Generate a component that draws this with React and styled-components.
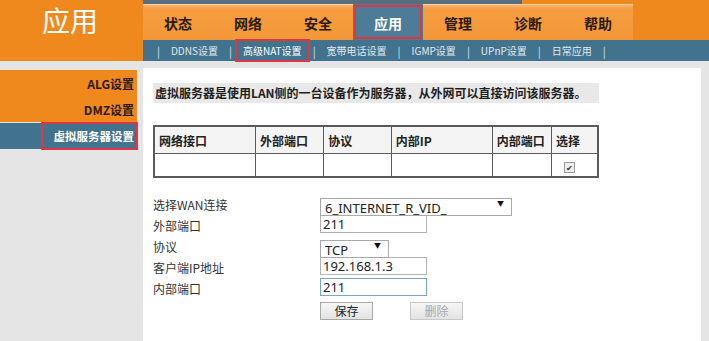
import React from 'react'
import styled, { createGlobalStyle } from 'styled-components'

const GlobalStyle = createGlobalStyle`
    html, body {
        margin: 0;
        padding: 0;
        background: #e5e5e5;
        font-family: "Noto Sans CJK SC", "Noto Sans", sans-serif;
    }
`

const orange = '#f0891d'
const steel = '#41738f'

const Page = styled.div`
    width: 709px;
    height: 341px;
    overflow: hidden;
    background: #e5e5e5;
    display: flex;
    flex-direction: column;
`

const Header = styled.div`
    display: flex;
    height: 61px;
`

const Logo = styled.div`
    width: 143px;
    background: ${orange};
    color: #fff;
    font-size: 28px;
    line-height: 40px;
    padding-left: 42px;
    box-sizing: border-box;
`

const NavArea = styled.div`
    flex: 1;
    display: flex;
    flex-direction: column;
    background: ${orange};
`

const TopStrip = styled.div`
    height: 4px;
    width: 379px;
    background: #566f80;
`

const Tabs = styled.div`
    display: flex;
    height: 36px;
`

const Tab = styled.div`
    width: 70px;
    display: flex;
    align-items: center;
    justify-content: center;
    font-size: 14px;
    font-weight: 700;
    color: ${p => (p.$active ? '#fff' : '#2b1a08')};
    background: ${p => (p.$active
        ? '#4d7c99'
        : 'linear-gradient(#f8b26a 0, #f59d42 12%, #f39837 100%)')};
    border-top: 1px solid ${p => (p.$active ? '#4d7c99' : '#fbd2a4')};
    outline: ${p => (p.$active ? '2px solid #e0363f' : 'none')};
    outline-offset: -3px;
    box-sizing: border-box;
`

const SubNav = styled.div`
    height: 21px;
    background: ${steel};
    display: flex;
    align-items: center;
    padding-left: 8px;
    color: #e9eef2;
    font-size: 10px;
`

const Sep = styled.span`
    color: #d7e1e8;
    padding: 0 6px;
    font-size: 11px;
`

const SubItem = styled.span`
    padding: 1px 5px;
    line-height: 15px;
    outline: ${p => (p.$active ? '2px solid #e0363f' : 'none')};
    outline-offset: ${p => (p.$active ? '1px' : '0')};
    color: ${p => (p.$active ? '#fff' : '#e2e9ee')};
`

const Body = styled.div`
    flex: 1;
    display: flex;
    padding: 7px 8px 0 0;
    gap: 6px;
`

const Sidebar = styled.div`
    width: 137px;
    display: flex;
    flex-direction: column;
    padding-top: 2px;
`

const SideGroup = styled.div`
    background: ${orange};
    display: flex;
    flex-direction: column;
`

const SideItem = styled.div`
    height: 26px;
    display: flex;
    align-items: center;
    justify-content: flex-end;
    padding-right: 3px;
    font-size: ${p => (p.$active ? '11.5px' : '12px')};
    font-weight: 700;
    color: ${p => (p.$active ? '#fff' : '#2b1a08')};
    background: ${p => (p.$active ? steel : 'transparent')};
    outline: ${p => (p.$active ? '2px solid #e0363f' : 'none')};
    outline-offset: -1px;
    margin-left: ${p => (p.$active ? '42px' : '0')};
`

const ActiveRow = styled.div`
    background: ${steel};
    margin-top: 1px;
`

const Content = styled.div`
    flex: 1;
    background: #fff;
    padding: 15px 0 0 10px;
    box-sizing: border-box;
    color: #333;
`

const Intro = styled.div`
    width: 446px;
    height: 20px;
    background: #e8e8e8;
    font-size: 12px;
    font-weight: 700;
    color: #1e1e1e;
    line-height: 20px;
    padding-left: 2px;
    box-sizing: border-box;
`

const Table = styled.table`
    margin-top: 22px;
    width: 446px;
    border-collapse: collapse;
    border: 2px solid #5a5a5a;
    font-size: 12px;
`

const Th = styled.th`
    height: 26px;
    text-align: left;
    padding: 0 4px;
    font-weight: 700;
    color: #222;
    background: #f4f4f4;
    border: 1px solid #5a5a5a;
    width: ${p => p.$w}px;
`

const Td = styled.td`
    height: 22px;
    padding: 0 12px;
    border: 1px solid #5a5a5a;
`

const Check = styled.span`
    display: inline-flex;
    width: 9px;
    height: 9px;
    border: 1px solid #9a9a9a;
    background: #ececec;
    font-size: 8px;
    line-height: 9px;
    justify-content: center;
    color: #333;
`

const Form = styled.div`
    margin-top: 16px;
    display: grid;
    grid-template-columns: 167px auto;
    row-gap: 3px;
    align-items: center;
`

const Label = styled.div`
    font-size: 12px;
    line-height: 14px;
    padding-top: 4px;
    color: #333;
`

const controlFont = `
    font-family: "Noto Sans", "Open Sans", sans-serif;
    font-size: 13px;
    color: #222;
`

const Input = styled.input`
    ${controlFont}
    width: 107px;
    height: 18px;
    box-sizing: border-box;
    border: 1px solid ${p => (p.$focus ? '#7aa6c6' : '#b3b3b3')};
    padding: 0 2px;
    margin: 0;
    outline: none;
    background: #fff;
`

const SelectWrap = styled.div`
    position: relative;
    width: ${p => p.$w}px;
    height: 18px;
`

const Select = styled.select`
    ${controlFont}
    appearance: none;
    width: 100%;
    height: 100%;
    box-sizing: border-box;
    border: 1px solid #a9a9a9;
    padding: 0 4px;
    margin: 0;
    background: #fff;
    outline: none;
`

const Arrow = styled.span`
    position: absolute;
    right: 8px;
    top: 4px;
    font-size: 7px;
    color: #111;
    pointer-events: none;
`

const Buttons = styled.div`
    grid-column: 2;
    display: flex;
    gap: 37px;
    margin-top: 3px;
`

const Button = styled.button`
    width: 53px;
    height: 18px;
    padding: 0;
    font-family: "Noto Sans CJK SC", sans-serif;
    font-size: 12px;
    line-height: 16px;
    color: ${p => (p.disabled ? '#a8a8a8' : '#222')};
    background: linear-gradient(#f6f6f6, #e3e3e3);
    border: 1px solid ${p => (p.disabled ? '#c8c8c8' : '#a8a8a8')};
`

const tabs = ['状态', '网络', '安全', '应用', '管理', '诊断', '帮助']
const subs = ['DDNS设置', '高级NAT设置', '宽带电话设置', 'IGMP设置', 'UPnP设置', '日常应用']
const cols = [
    ['网络接口', 107], ['外部端口', 68], ['协议', 67],
    ['内部IP', 107], ['内部端口', 57], ['选择', 39],
]

const App = () => (
    <Page>
        <GlobalStyle />
        <Header>
            <Logo>应用</Logo>
            <NavArea>
                <TopStrip />
                <Tabs>
                    {tabs.map(t => <Tab key={t} $active={t === '应用'}>{t}</Tab>)}
                </Tabs>
                <SubNav>
                    <Sep>|</Sep>
                    {subs.map(s => (
                        <React.Fragment key={s}>
                            <SubItem $active={s === '高级NAT设置'}>{s}</SubItem>
                            <Sep>|</Sep>
                        </React.Fragment>
                    ))}
                </SubNav>
            </NavArea>
        </Header>
        <Body>
            <Sidebar>
                <SideGroup>
                    <SideItem>ALG设置</SideItem>
                    <SideItem>DMZ设置</SideItem>
                </SideGroup>
                <ActiveRow>
                    <SideItem $active>虚拟服务器设置</SideItem>
                </ActiveRow>
            </Sidebar>
            <Content>
                <Intro>虚拟服务器是使用LAN侧的一台设备作为服务器，从外网可以直接访问该服务器。</Intro>
                <Table>
                    <thead>
                        <tr>{cols.map(([c, w]) => <Th key={c} $w={w}>{c}</Th>)}</tr>
                    </thead>
                    <tbody>
                        <tr>
                            {cols.map(([c]) => (
                                <Td key={c}>{c === '选择' && <Check>✔</Check>}</Td>
                            ))}
                        </tr>
                    </tbody>
                </Table>
                <Form>
                    <Label>选择WAN连接</Label>
                    <SelectWrap $w={192}>
                        <Select defaultValue="wan"><option value="wan">6_INTERNET_R_VID_</option></Select>
                        <Arrow>▼</Arrow>
                    </SelectWrap>
                    <Label>外部端口</Label>
                    <Input defaultValue="211" />
                    <Label>协议</Label>
                    <SelectWrap $w={69}>
                        <Select defaultValue="tcp"><option value="tcp">TCP</option></Select>
                        <Arrow>▼</Arrow>
                    </SelectWrap>
                    <Label>客户端IP地址</Label>
                    <Input defaultValue="192.168.1.3" />
                    <Label>内部端口</Label>
                    <Input defaultValue="211" $focus />
                    <Buttons>
                        <Button>保存</Button>
                        <Button disabled>删除</Button>
                    </Buttons>
                </Form>
            </Content>
        </Body>
    </Page>
)

export default App
